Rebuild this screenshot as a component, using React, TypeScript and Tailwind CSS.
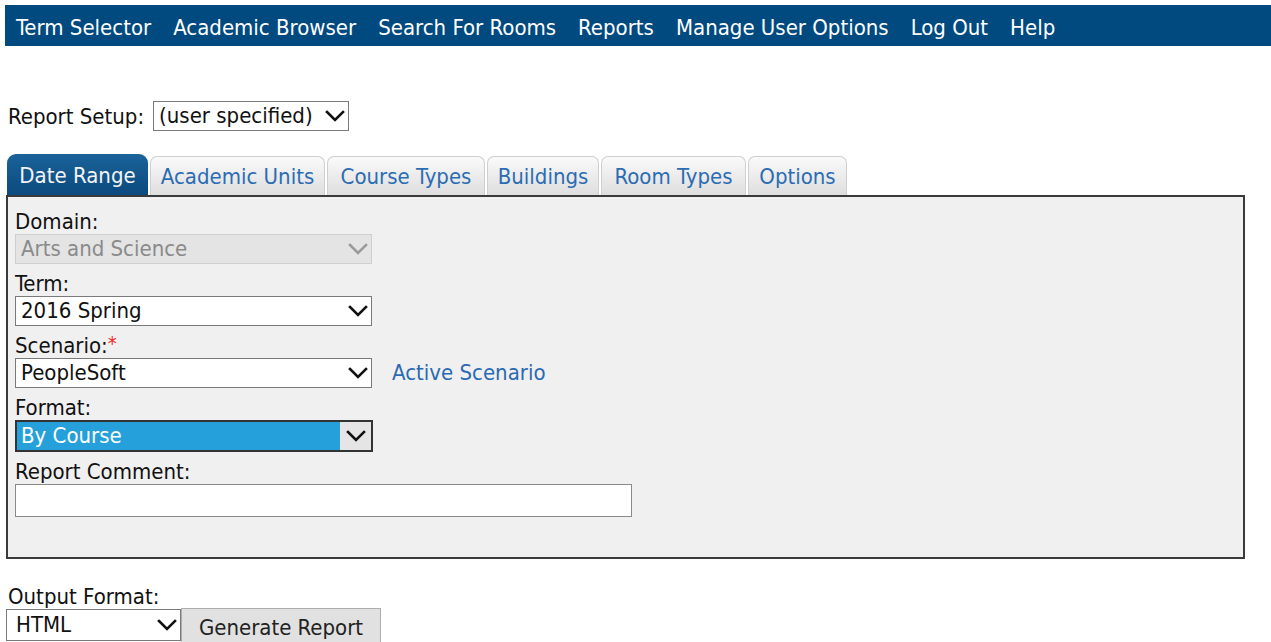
import React from "react";

const FONT = '"DejaVu Sans Condensed", "DejaVu Sans", Verdana, sans-serif';

function Chevron({ className = "" }: { className?: string }) {
  return (
    <svg width="20" height="12" viewBox="0 0 20 12" className={className}>
      <path d="M2 2 L10 10 L18 2" fill="none" stroke="currentColor" strokeWidth="2.6" strokeLinecap="square" />
    </svg>
  );
}

function SelectBox({
  value,
  width,
  height = 30,
  disabled = false,
  focused = false,
  padLeft = 5,
}: {
  value: string;
  width: number;
  height?: number;
  disabled?: boolean;
  focused?: boolean;
  padLeft?: number;
}) {
  if (focused) {
    return (
      <div
        className="flex items-stretch border-2 border-[#333] bg-[#e5e5e5] box-border"
        style={{ width, height }}
      >
        <div className="flex-1 bg-[#26a0da] text-white pl-[4px] flex items-center leading-none">{value}</div>
        <div className="w-[31px] flex items-center justify-center text-[#111]">
          <Chevron />
        </div>
      </div>
    );
  }
  return (
    <div
      className={
        "flex items-center justify-between box-border border pr-[3px] leading-none " +
        (disabled ? "bg-[#e4e4e4] border-[#cfcfcf] text-[#8a8a8a]" : "bg-white border-[#7a7a7a] text-[#111]")
      }
      style={{ width, height, paddingLeft: padLeft }}
    >
      <span>{value}</span>
      <Chevron className={disabled ? "text-[#9a9a9a]" : "text-[#111]"} />
    </div>
  );
}

const navItems = ["Term Selector", "Academic Browser", "Search For Rooms", "Reports", "Manage User Options", "Log Out", "Help"];
const tabs = [
  { label: "Academic Units", w: 175 },
  { label: "Course Types", w: 158 },
  { label: "Buildings", w: 112 },
  { label: "Room Types", w: 145 },
  { label: "Options", w: 99 },
];

function Label({ children }: { children: React.ReactNode }) {
  return <div className="h-[24px] leading-[24px] text-[#111]">{children}</div>;
}

export default function App() {
  return (
    <div className="bg-white w-[1271px] h-[642px] overflow-hidden text-[22px]" style={{ fontFamily: FONT }}>
      {/* top navigation */}
      <div className="ml-[5px] mt-[5px] h-[41px] bg-[#004a80] flex items-center pt-[3px] pl-[11px] gap-[22px] text-white">
        {navItems.map((n) => (
          <span key={n} className="whitespace-nowrap">{n}</span>
        ))}
      </div>

      {/* report setup */}
      <div className="flex items-center mt-[55px] ml-[8px] h-[30px]">
        <span className="text-[#111] mr-[9px]">Report Setup:</span>
        <SelectBox value="(user specified)" width={196} />
      </div>

      {/* tabs */}
      <div className="mt-[23px] ml-[6px] flex items-end h-[41px]">
        <div className="ml-[1px] w-[141px] h-[41px] pt-[2px] rounded-t-[9px] bg-gradient-to-b from-[#1a6399] to-[#0b4a7e] text-[#f4f4f4] flex items-center justify-center">
          Date Range
        </div>
        {tabs.map((t) => (
          <div
            key={t.label}
            className="ml-[2px] h-[39px] rounded-t-[7px] border border-b-0 border-[#cfcfcf] bg-gradient-to-b from-[#fafafa] to-[#dedede] text-[#2b6cb3] flex items-center justify-center whitespace-nowrap"
            style={{ width: t.w }}
          >
            {t.label}
          </div>
        ))}
      </div>

      {/* tab panel */}
      <div className="ml-[6px] w-[1239px] h-[364px] border-2 border-[#3a3a3a] bg-[#f0f0f0] pt-[13px] pl-[7px] box-border">
        <Label>Domain:</Label>
        <SelectBox value="Arts and Science" width={357} disabled />
        <div className="h-[8px]" />
        <Label>Term:</Label>
        <SelectBox value="2016 Spring" width={357} />
        <div className="h-[8px]" />
        <Label>
          Scenario:<span className="text-[#f02828] text-[20px] align-top leading-[18px]">*</span>
        </Label>
        <div className="flex items-center h-[30px]">
          <SelectBox value="PeopleSoft" width={357} />
          <span className="ml-[20px] text-[#2a6ab2] leading-none">Active Scenario</span>
        </div>
        <div className="h-[8px]" />
        <Label>Format:</Label>
        <SelectBox value="By Course" width={358} height={32} focused />
        <div className="h-[8px]" />
        <Label>Report Comment:</Label>
        <div className="w-[617px] h-[33px] bg-white border border-[#8a8a8a] box-border" />
      </div>

      {/* output */}
      <div className="ml-[8px] mt-[26px]">
        <Label>Output Format:</Label>
      </div>
      <div className="ml-[6px] flex items-start">
        <SelectBox value="HTML" width={175} height={32} padLeft={9} />
        <div className="w-[200px] h-[38px] -mt-[1px] bg-[#e1e1e1] border border-[#adadad] box-border flex items-center justify-center text-[#222]">
          Generate Report
        </div>
      </div>
    </div>
  );
}
